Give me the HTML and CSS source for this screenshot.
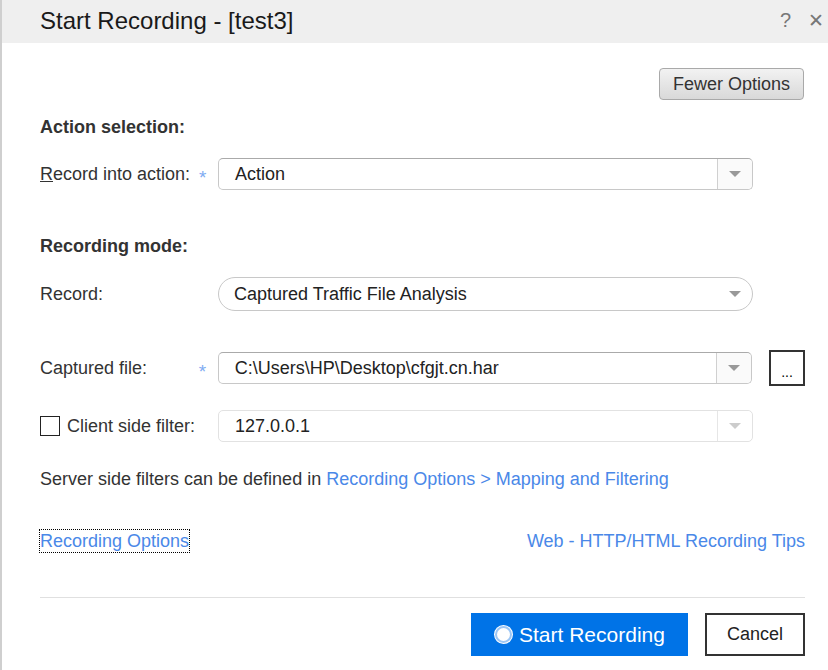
FILE: index.html
```html
<!DOCTYPE html>
<html>
<head>
<meta charset="utf-8">
<link rel="stylesheet" href="styles.css">
</head>
<body>
<div class="dialog">
  <div class="titlebar">
    <div class="title">Start Recording - [test3]</div>
    <div class="tb-icons"><span class="help">?</span><span class="close">✕</span></div>
  </div>
  <div class="content">
    <div class="top-row"><button class="fewer">Fewer Options</button></div>
    <div class="section-title">Action selection:</div>
    <div class="row first">
      <div class="label"><u>R</u>ecord into action:</div>
      <div class="star">*</div>
      <div class="combo">
        <div class="combo-text">Action</div>
        <div class="combo-btn"><span class="caret"></span></div>
      </div>
    </div>
    <div class="section-title mode">Recording mode:</div>
    <div class="row first">
      <div class="label">Record:</div>
      <div class="star"></div>
      <div class="pill">
        <div class="combo-text">Captured Traffic File Analysis</div>
        <span class="caret"></span>
      </div>
    </div>
    <div class="row captured">
      <div class="label">Captured file:</div>
      <div class="star">*</div>
      <div class="combo">
        <div class="combo-text">C:\Users\HP\Desktop\cfgjt.cn.har</div>
        <div class="combo-btn"><span class="caret"></span></div>
      </div>
      <button class="browse">...</button>
    </div>
    <div class="row filter">
      <div class="label"><span class="checkbox"></span>Client side filter:</div>
      <div class="star"></div>
      <div class="combo light">
        <div class="combo-text">127.0.0.1</div>
        <div class="combo-btn"><span class="caret"></span></div>
      </div>
    </div>
    <div class="server">Server side filters can be defined in <a class="link">Recording Options &gt; Mapping and Filtering</a></div>
    <div class="links">
      <a class="link focus">Recording Options</a>
      <a class="link">Web - HTTP/HTML Recording Tips</a>
    </div>
    <div class="footer">
      <button class="start"><span class="radio"></span>Start Recording</button>
      <button class="cancel">Cancel</button>
    </div>
  </div>
</div>
</body>
</html>
```
FILE: styles.css
```css
html, body { margin: 0; padding: 0; background: #fff; }
body { font-family: "Liberation Sans", Arial, sans-serif; color: #333; }
.dialog { width: 828px; height: 670px; border-left: 2px solid #cfcfcf; box-sizing: border-box; overflow: hidden; }
.titlebar { height: 43px; background: #efefef; display: flex; align-items: center; justify-content: space-between; padding: 0 4px 2px 38px; box-sizing: border-box; }
.title { font-size: 24px; color: #1a1a1a; }
.tb-icons { display: flex; gap: 17px; color: #777; align-items: center; }
.help { font-size: 20px; }
.close { font-size: 19px; }
.content { padding: 0 23px 0 38px; font-size: 18px; line-height: 22px; }
.top-row { display: flex; justify-content: flex-end; padding-top: 25px; }
.fewer { font-family: inherit; font-size: 18px; color: #333; height: 32px; width: 145px; border: 1px solid #a9a9a9; border-radius: 4px; background: linear-gradient(#f2f2f2, #d9d9d9); padding: 0; margin-right: 1px; }
.section-title { font-weight: bold; margin-top: 16px; height: 22px; }
.section-title.mode { margin-top: 45px; }
.row { display: flex; align-items: center; }
.row.first { margin-top: 20px; }
.label { width: 156px; display: flex; align-items: center; }
.star { width: 19px; padding-left: 3px; color: #80acf2; font-size: 19px; padding-top: 8px; }
.combo { width: 535px; height: 32px; display: flex; box-sizing: border-box; border: 1px solid #c8c8c8; border-radius: 5px; border-top-color: #aaa; }
.combo-text { flex: 1; display: flex; align-items: center; padding-left: 16px; color: #222; }
.combo-btn { width: 34px; border-left: 1px solid #d0d0d0; background: #fafafa; border-radius: 0 5px 5px 0; display: flex; align-items: center; justify-content: center; }
.caret { width: 0; height: 0; border-left: 6px solid transparent; border-right: 6px solid transparent; border-top: 6px solid #999; }
.pill { width: 535px; height: 34px; border: 1px solid #c8c8c8; border-radius: 17px; display: flex; align-items: center; box-sizing: border-box; padding-right: 11px; }
.pill .combo-text { padding-left: 15px; }
.captured { margin-top: 39px; }
.browse { margin-left: 17px; width: 36px; height: 36px; border: 2px solid #333; background: #fff; font-family: inherit; font-size: 14px; padding: 8px 0 0; color: #000; }
.filter { margin-top: 24px; }
.checkbox { width: 18px; height: 18px; border: 1px solid #222; display: inline-block; margin-right: 7px; }
.combo.light { border-color: #e2e2e2; }
.combo.light .combo-btn { border-left-color: #e6e6e6; background: #fff; }
.combo.light .caret { border-top-color: #ccc; }
.server { margin-top: 26px; }
.link { color: #4a88e8; text-decoration: none; }
.links { display: flex; justify-content: space-between; margin-top: 40px; }
.focus { outline: 1px dotted #000; }
.footer { border-top: 1px solid #e0e0e0; margin-top: 45px; display: flex; justify-content: flex-end; gap: 17px; padding-top: 15px; }
.start { height: 43px; width: 217px; background: #0073e7; border: none; color: #fff; font-family: inherit; font-size: 21px; display: flex; align-items: center; justify-content: flex-start; gap: 7px; padding: 0 0 0 24px; }
.radio { width: 13px; height: 13px; border-radius: 50%; background: #fff; border: 2px solid #9cc6f5; box-shadow: 0 0 0 1px #fff; }
.cancel { height: 43px; width: 100px; border: 2px solid #333; background: #fff; font-family: inherit; font-size: 18px; color: #222; }
```
